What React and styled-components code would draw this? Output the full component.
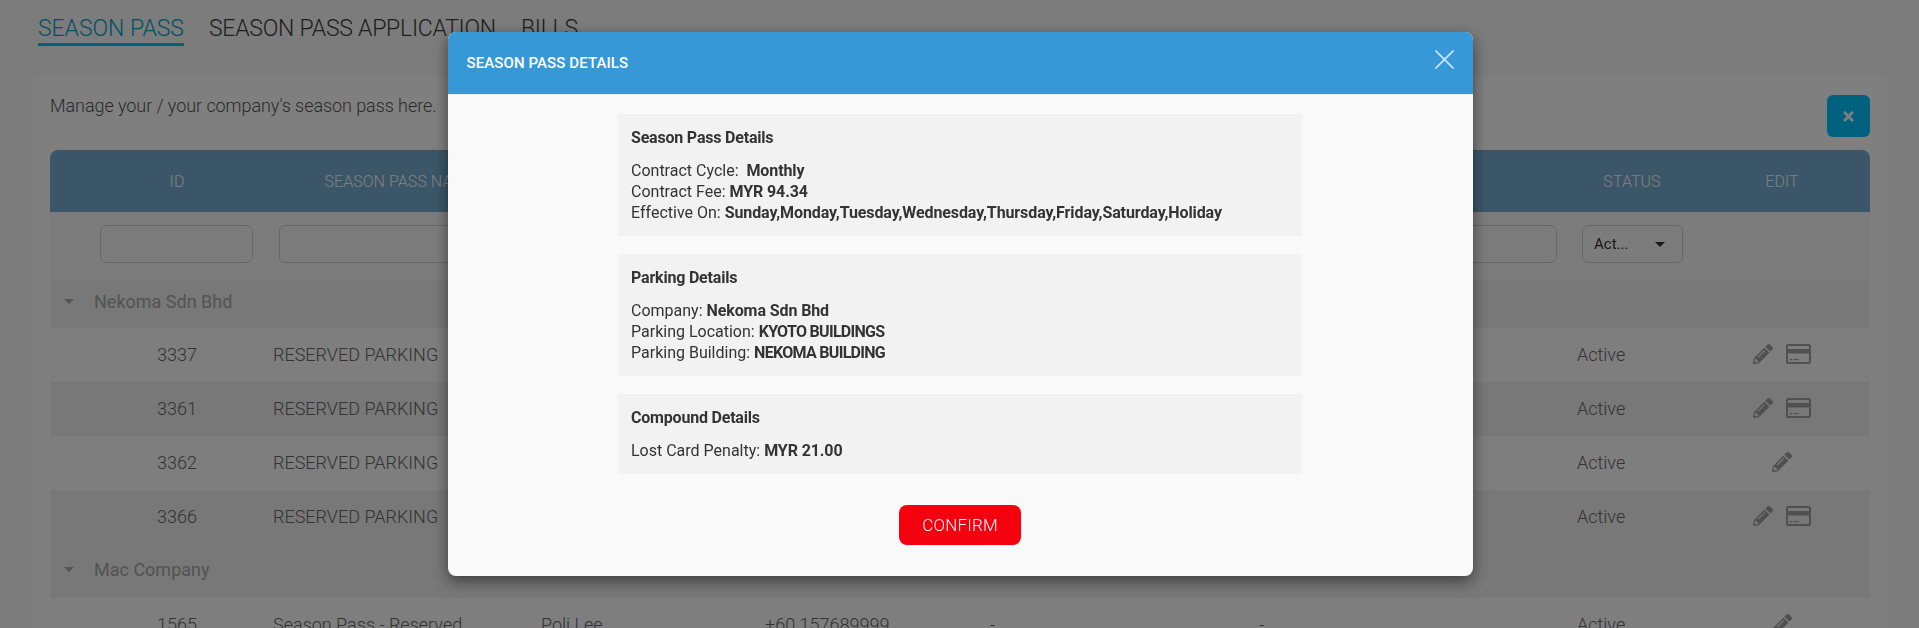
import React from "react";
import styled, {createGlobalStyle, css} from "styled-components";
import {FaPencilAlt, FaTimes} from "react-icons/fa";

const GlobalStyle = createGlobalStyle`
    html, body {
        margin: 0;
        height: 100%;
        overflow: hidden;
        background: #f8f8f8;
    }
    body {
        font-family: Roboto, "Liberation Sans", sans-serif;
        font-weight: 300;
        color: #666;
    }
`;

const Page = styled.div`
    height: 100vh;
    box-sizing: border-box;
    overflow: hidden;
    padding: 14px 30px 0 31px;
`;

const Tabs = styled.div`
    display: flex;
    gap: 25px;
    padding-left: 7px;
`;

const Tab = styled.div`
    height: 29px;
    line-height: 30px;
    font-size: 23px;
    letter-spacing: ${(p) => (p.$active ? "-0.05px" : "-0.25px")};
    white-space: nowrap;
    color: ${(p) => (p.$active ? "#00a3cc" : "#3c3c3c")};
    border-bottom: 3px solid ${(p) => (p.$active ? "#00c4fd" : "transparent")};
`;

const Card = styled.div`
    margin-top: 30px;
    padding: 19px;
    background: #fff;
    border-radius: 8px;
`;

const CardTop = styled.div`
    display: flex;
    justify-content: space-between;
    align-items: flex-start;
    margin-bottom: 13px;
`;

const Intro = styled.div`
    font-size: 18px;
    line-height: 22px;
    letter-spacing: -0.07px;
    color: #555;
`;

const ClearButton = styled.button`
    width: 43px;
    height: 42px;
    padding: 0;
    display: flex;
    align-items: center;
    justify-content: center;
    border: 0;
    border-radius: 6px;
    background: #00c4fd;
    color: #fff;
    font-size: 15px;
`;

const columns = css`
    display: grid;
    grid-template-columns: 216px 268px 224px 225px 269px 318px 124px 176px;
    align-items: center;
`;

const HeadRow = styled.div`
    ${columns};
    height: 62px;
    background: #76add0;
    border-radius: 8px 8px 0 0;
    color: #fff;
    font-size: 16px;
`;

const HeadCell = styled.div`
    text-align: center;
    white-space: nowrap;
    letter-spacing: 0.05px;
    padding-left: ${(p) => (p.$id ? "38px" : "0")};
`;

const TableBody = styled.div`
    background: #fcfcfc;
    border-radius: 0 0 8px 8px;
`;

const FilterRow = styled.div`
    ${columns};
    height: 68px;
    padding-bottom: 4px;
    box-sizing: border-box;
    background: #f9f9f9;
`;

const FilterCell = styled.div`
    padding: ${(p) => (p.$id ? "0 13px 0 50px" : "0 13px")};
`;

const FilterInput = styled.div`
    height: 38px;
    box-sizing: border-box;
    border: 1px solid #cfcfcf;
    border-radius: 6px;
`;

const StatusCell = styled.div`
    padding-left: 12px;
`;

const StatusSelect = styled(FilterInput)`
    display: flex;
    align-items: center;
    justify-content: space-between;
    width: 101px;
    padding: 0 17px 0 11px;
    font-size: 15px;
    font-weight: 400;
    color: #333;
`;

const Caret = styled.span`
    width: 0;
    height: 0;
    border-left: 5px solid transparent;
    border-right: 5px solid transparent;
    border-top: 5px solid ${(p) => p.$color || "#333"};
`;

const GroupRow = styled.div`
    display: flex;
    align-items: center;
    height: ${(p) => p.$height}px;
    padding: 0 0 ${(p) => p.$lift}px 14px;
    box-sizing: border-box;
    background: #f0f0f0;
    font-size: 18px;
    font-weight: 400;
    color: #a6a6a6;
`;

const GroupName = styled.span`
    margin-left: 20px;
`;

const Row = styled.div`
    ${columns};
    height: 54px;
    padding-bottom: 2px;
    box-sizing: border-box;
    font-size: 18px;
    color: #666;
    background: ${(p) => (p.$striped ? "#f0f0f0" : "transparent")};
`;

const IdCell = styled.div`
    padding-left: 38px;
    text-align: center;
`;

const Cell = styled.div`
    padding-left: 7px;
    white-space: nowrap;
`;

const EditCell = styled.div`
    display: flex;
    align-items: center;
    justify-content: center;
    gap: 13px;
    color: #a0a0a0;
`;

const PencilIcon = styled(FaPencilAlt)`
    width: 20px;
    height: 20px;
`;

const Overlay = styled.div`
    position: fixed;
    inset: 0;
    background: rgba(0, 0, 0, 0.5);
    display: flex;
    justify-content: center;
    align-items: flex-start;
    padding-top: 32px;
`;

const Modal = styled.div`
    width: 1025px;
    margin-left: 1px;
    background: #f9f9f9;
    border-radius: 8px;
    box-shadow: 0 5px 15px rgba(0, 0, 0, 0.5);
    overflow: hidden;
`;

const ModalHeader = styled.div`
    display: flex;
    align-items: center;
    justify-content: space-between;
    height: 62px;
    padding: 0 19px;
    background: #3798d8;
    border-bottom: 1px solid #eee;
`;

const ModalTitle = styled.div`
    font-size: 15px;
    font-weight: 500;
    color: #fff;
    letter-spacing: 0.1px;
`;

const CloseButton = styled.svg`
    width: 19px;
    height: 19px;
    margin-bottom: 8px;
    stroke: #cfe6f6;
    stroke-width: 1.6;
`;

const ModalBody = styled.div`
    display: flex;
    flex-direction: column;
    align-items: center;
    gap: 18px;
    padding: 19px 0 31px;
`;

const DetailBox = styled.div`
    width: 684px;
    box-sizing: border-box;
    padding: 13px;
    background: #f2f2f2;
    font-size: 16px;
    line-height: 21px;
    font-weight: 400;
    color: #333;
`;

const DetailTitle = styled.div`
    margin-bottom: 12px;
    font-weight: 700;
    letter-spacing: -0.2px;
`;

const Value = styled.b`
    font-weight: 700;
    letter-spacing: ${(p) => (p.$caps ? "-0.7px" : "-0.1px")};
`;

const ConfirmButton = styled.button`
    width: 122px;
    height: 40px;
    margin-top: 13px;
    border: 0;
    border-radius: 8px;
    background: #f5000f;
    color: #fff;
    font-family: inherit;
    font-size: 17px;
    font-weight: 300;
    letter-spacing: 0.2px;
`;

function CardIcon() {
    return (
        <svg width="25" height="20" viewBox="0 0 25 20">
            <rect x="1" y="1" width="23" height="18" rx="1.5" fill="none" stroke="currentColor" strokeWidth="2"/>
            <rect x="1" y="5" width="23" height="4.5" fill="currentColor"/>
            <rect x="3.5" y="15" width="3" height="1.2" fill="currentColor"/>
            <rect x="8" y="15" width="5" height="1.2" fill="currentColor"/>
        </svg>
    );
}

const sections = [
    {
        title: "Season Pass Details",
        lines: [
            {label: "Contract Cycle: \u00a0", value: "Monthly"},
            {label: "Contract Fee: ", value: "MYR 94.34"},
            {label: "Effective On: ", value: "Sunday,Monday,Tuesday,Wednesday,Thursday,Friday,Saturday,Holiday"},
        ],
    },
    {
        title: "Parking Details",
        lines: [
            {label: "Company: ", value: "Nekoma Sdn Bhd"},
            {label: "Parking Location: ", value: "KYOTO BUILDINGS", caps: true},
            {label: "Parking Building: ", value: "NEKOMA BUILDING", caps: true},
        ],
    },
    {
        title: "Compound Details",
        lines: [{label: "Lost Card Penalty: ", value: "MYR 21.00"}],
    },
];

const passes = [
    {id: 3337, card: true},
    {id: 3361, card: true},
    {id: 3362, card: false},
    {id: 3366, card: true},
];

const headers = ["SEASON PASS NAME", "", "", "", "", "STATUS", "EDIT"];

export default function App() {
    return (
        <>
            <GlobalStyle/>
            <Page>
                <Tabs>
                    <Tab $active>SEASON PASS</Tab>
                    <Tab>SEASON PASS APPLICATION</Tab>
                    <Tab>BILLS</Tab>
                </Tabs>
                <Card>
                    <CardTop>
                        <Intro>Manage your / your company's season pass here.</Intro>
                        <ClearButton><FaTimes/></ClearButton>
                    </CardTop>
                    <HeadRow>
                        <HeadCell $id>ID</HeadCell>
                        {headers.map((h, i) => <HeadCell key={i}>{h}</HeadCell>)}
                    </HeadRow>
                    <TableBody>
                        <FilterRow>
                            <FilterCell $id><FilterInput/></FilterCell>
                            <FilterCell><FilterInput/></FilterCell>
                            <FilterCell/>
                            <FilterCell/>
                            <FilterCell/>
                            <FilterCell><FilterInput/></FilterCell>
                            <StatusCell><StatusSelect>Act...<Caret/></StatusSelect></StatusCell>
                            <FilterCell/>
                        </FilterRow>
                        <GroupRow $height={48} $lift={6}>
                            <Caret $color="#a6a6a6"/>
                            <GroupName>Nekoma Sdn Bhd</GroupName>
                        </GroupRow>
                        {passes.map((pass, i) => (
                            <Row key={pass.id} $striped={i % 2 === 1}>
                                <IdCell>{pass.id}</IdCell>
                                <Cell>RESERVED PARKING</Cell>
                                <Cell/>
                                <Cell/>
                                <Cell/>
                                <Cell/>
                                <Cell>Active</Cell>
                                <EditCell>
                                    <PencilIcon/>
                                    {pass.card && <CardIcon/>}
                                </EditCell>
                            </Row>
                        ))}
                        <GroupRow $height={54} $lift={3}>
                            <Caret $color="#a6a6a6"/>
                            <GroupName>Mac Company</GroupName>
                        </GroupRow>
                        <Row>
                            <IdCell>1565</IdCell>
                            <Cell>Season Pass - Reserved</Cell>
                            <Cell>Poli Lee</Cell>
                            <Cell>+60 157689999</Cell>
                            <Cell>-</Cell>
                            <Cell>-</Cell>
                            <Cell>Active</Cell>
                            <EditCell><PencilIcon/></EditCell>
                        </Row>
                    </TableBody>
                </Card>
            </Page>
            <Overlay>
                <Modal>
                    <ModalHeader>
                        <ModalTitle>SEASON PASS DETAILS</ModalTitle>
                        <CloseButton viewBox="0 0 19 19">
                            <line x1="0.5" y1="0.5" x2="18.5" y2="18.5"/>
                            <line x1="18.5" y1="0.5" x2="0.5" y2="18.5"/>
                        </CloseButton>
                    </ModalHeader>
                    <ModalBody>
                        {sections.map((section) => (
                            <DetailBox key={section.title}>
                                <DetailTitle>{section.title}</DetailTitle>
                                {section.lines.map((line) => (
                                    <div key={line.label}>{line.label}<Value $caps={line.caps}>{line.value}</Value></div>
                                ))}
                            </DetailBox>
                        ))}
                        <ConfirmButton>CONFIRM</ConfirmButton>
                    </ModalBody>
                </Modal>
            </Overlay>
        </>
    );
}
